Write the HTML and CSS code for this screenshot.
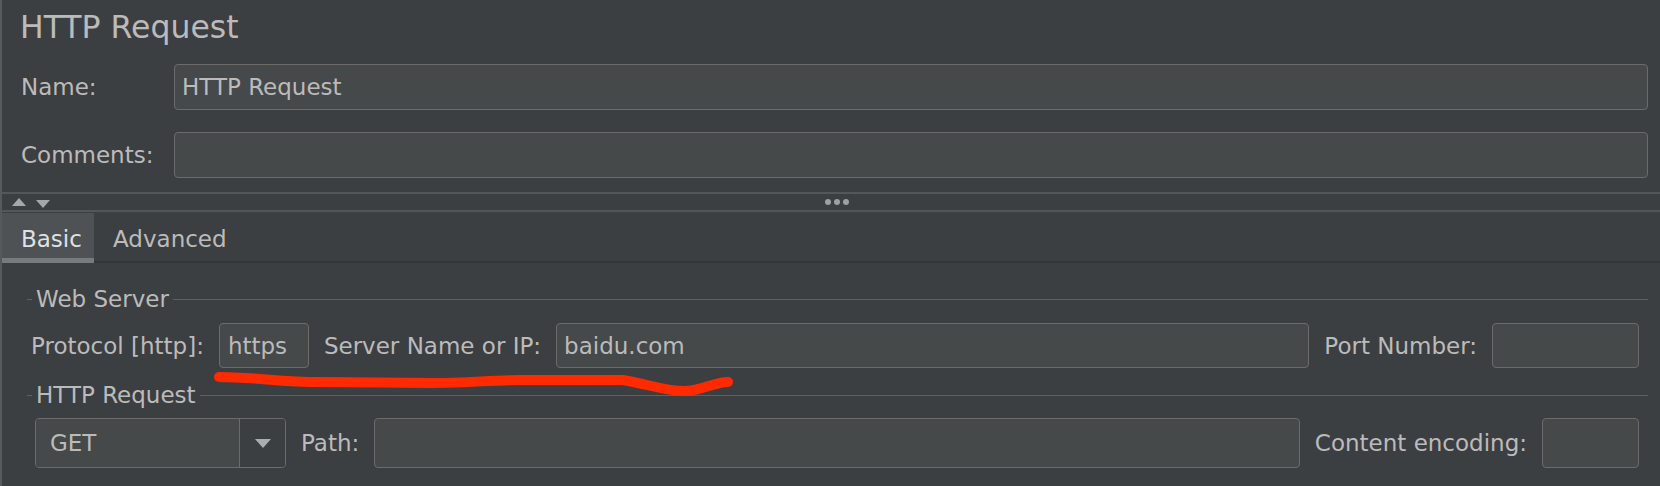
FILE: index.html
```html
<!DOCTYPE html>
<html lang="en">
<head>
<meta charset="utf-8">
<title>HTTP Request</title>
<link rel="stylesheet" href="styles.css">
</head>
<body>
<div class="app">
  <h1 class="title">HTTP Request</h1>
  <div class="meta">
    <div class="meta-row"><span class="label">Name:</span><div class="field">HTTP Request</div></div>
    <div class="meta-row"><span class="label">Comments:</span><div class="field"></div></div>
  </div>
  <div class="splitter">
    <div class="arrows">
      <svg class="arrow" width="14" height="8" viewBox="0 0 14 8"><polygon points="0,8 7,0 14,8"/></svg>
      <svg class="arrow down" width="14" height="8" viewBox="0 0 14 8"><polygon points="0,0 14,0 7,8"/></svg>
    </div>
    <div class="grip"><span></span><span></span><span></span></div>
  </div>
  <div class="tabs">
    <div class="tab active">Basic</div>
    <div class="tab">Advanced</div>
  </div>
  <div class="panel">
    <div class="group-title"><span class="tick"></span><span class="legend">Web Server</span><span class="rule"></span></div>
    <div class="row server-row">
      <span class="label">Protocol [http]:</span>
      <div class="field proto">https</div>
      <span class="label">Server Name or IP:</span>
      <div class="field grow">baidu.com</div>
      <span class="label">Port Number:</span>
      <div class="field port"></div>
    </div>
    <div class="group-title second"><span class="tick"></span><span class="legend">HTTP Request</span><span class="rule"></span></div>
    <div class="row method-row">
      <div class="combo">
        <div class="combo-value">GET</div>
        <div class="combo-btn"><svg width="16" height="9" viewBox="0 0 16 9"><polygon points="0,0 16,0 8,9"/></svg></div>
      </div>
      <span class="label">Path:</span>
      <div class="field grow"></div>
      <span class="label">Content encoding:</span>
      <div class="field enc"></div>
    </div>
  </div>
</div>
<svg class="annotation" width="1660" height="486" viewBox="0 0 1660 486">
  <path d="M 219 377 C 255 377, 280 382, 320 382 L 433 383 C 470 383, 490 380, 520 380 L 623 380 C 648 384, 664 391, 684 391 C 702 391, 714 382, 728 382" fill="none" stroke="#ff2a00" stroke-width="10" stroke-linecap="round" stroke-linejoin="round"/>
</svg>
</body>
</html>
```

FILE: styles.css
```css
html, body {
  margin: 0;
  padding: 0;
}

body {
  position: relative;
  width: 1660px;
  height: 486px;
  overflow: hidden;
  background: #3c3f41;
  color: #bbbbbb;
  font-family: "DejaVu Sans", "Noto Sans", sans-serif;
  font-size: 23px;
}

.app {
  box-sizing: border-box;
  height: 486px;
  border-left: 2px solid #56595b;
}

.title {
  margin: 0;
  padding: 7px 0 0 18px;
  font-size: 31.5px;
  line-height: 40px;
  font-weight: normal;
  color: #bbbbbb;
}

.meta {
  display: grid;
  row-gap: 22px;
  padding: 17px 12px 0 19px;
}

.meta-row {
  display: grid;
  grid-template-columns: 153px 1fr;
  align-items: center;
  height: 46px;
}

.label {
  white-space: nowrap;
  line-height: 46px;
}

.field {
  box-sizing: border-box;
  height: 100%;
  background: #45494a;
  border: 1px solid #6b6b6b;
  border-radius: 4px;
  padding-left: 7px;
  display: flex;
  align-items: center;
  color: #bbbbbb;
  white-space: nowrap;
}

.splitter {
  margin-top: 14px;
  height: 16px;
  border-top: 2px solid #545658;
  border-bottom: 2px solid #545658;
  display: flex;
  align-items: center;
}

.arrows {
  display: flex;
  gap: 10px;
  margin-left: 10px;
  margin-top: 1px;
}

.arrow {
  display: block;
  fill: #a4a8ac;
}

.arrow.down {
  margin-top: 2px;
}

.grip {
  display: flex;
  gap: 3px;
  margin-left: 775px;
}

.grip span {
  width: 6px;
  height: 6px;
  border-radius: 50%;
  background: #9da1a5;
}

.tabs {
  display: flex;
  align-items: flex-end;
  height: 51px;
  box-shadow: inset 0 -2px 0 #333537;
}

.tab {
  box-sizing: border-box;
  height: 50px;
  padding: 7px 16px 0 19px;
  line-height: 38px;
  border-bottom: 5px solid transparent;
  color: #bbbbbb;
  white-space: nowrap;
}

.tab.active {
  width: 92px;
  padding-right: 0;
  background: #4e5254;
  border-bottom-color: #767b80;
  color: #dfe1e4;
}

.panel {
  padding: 0 12px 0 25px;
}

.group-title {
  display: flex;
  align-items: center;
  height: 26px;
  margin-top: 23px;
}

.group-title.second {
  margin-top: 14px;
}

.tick {
  width: 5px;
  height: 1px;
  background: #5e6163;
}

.legend {
  margin: 0 4px 0 4px;
  line-height: 26px;
  white-space: nowrap;
}

.rule {
  flex: 1;
  height: 1px;
  background: #5e6163;
}

.row {
  display: flex;
  align-items: center;
  gap: 15px;
  padding-right: 9px;
}

.server-row {
  height: 45px;
  margin-top: 11px;
  padding-left: 4px;
}

.method-row {
  height: 50px;
  margin-top: 10px;
  padding-left: 8px;
}

.grow {
  flex: 1;
}

.proto {
  width: 90px;
  flex: none;
  padding-left: 8px;
}

.port {
  width: 147px;
  flex: none;
}

.enc {
  width: 97px;
  flex: none;
}

.combo {
  box-sizing: border-box;
  width: 251px;
  height: 100%;
  flex: none;
  display: flex;
  border: 1px solid #6b6b6b;
  border-radius: 4px;
  overflow: hidden;
}

.combo-value {
  flex: 1;
  background: #45494a;
  border-right: 1px solid #6b6b6b;
  padding-left: 14px;
  display: flex;
  align-items: center;
}

.combo-btn {
  width: 45px;
  display: flex;
  align-items: center;
  justify-content: center;
  background: #3c3f41;
}

.combo-btn svg {
  display: block;
  fill: #a9adb1;
  margin-top: 1px;
}

.annotation {
  position: absolute;
  left: 0;
  top: 0;
  pointer-events: none;
}
```
